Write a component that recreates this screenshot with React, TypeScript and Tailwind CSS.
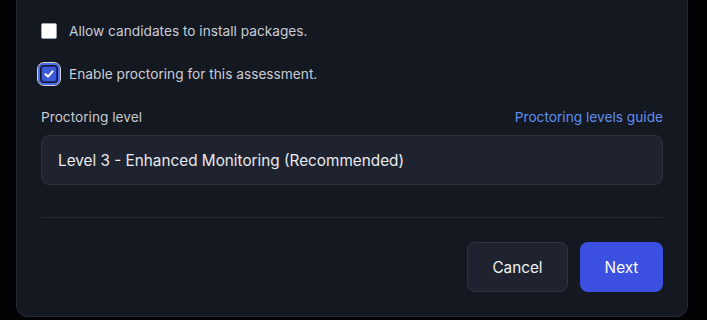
import React from "react";

export default function App() {
  return (
    <div
      className="w-[707px] h-[320px] bg-[#030305] overflow-hidden"
      style={{ fontFamily: "Inter, 'Noto Sans', sans-serif" }}
    >
      <div className="ml-[16px] w-[672px] bg-[#141821] border-x border-b border-[#262a35] rounded-b-[12px] px-[24px] pt-[21px] pb-[24px]">
        <div className="flex items-center h-[20px] gap-[12px]">
          <div className="w-[16px] h-[16px] bg-white rounded-[2px] border border-[#9ca3af]" />
          <span className="text-[13.7px] leading-5 text-[#c9cdd5]">Allow candidates to install packages.</span>
        </div>
        <div className="flex items-center h-[20px] gap-[12px] mt-[23px]">
          <div className="w-[16px] h-[16px] bg-[#3b5bdb] rounded-[3px] border border-[#1e2a80] ring-2 ring-[#4b6cf0] ring-offset-1 ring-offset-[#141821] outline outline-1 outline-offset-[3px] outline-white/80 flex items-center justify-center">
            <svg width="12" height="12" viewBox="0 0 12 12" fill="none">
              <path d="M2.5 6.3 L5 8.6 L9.6 3.4" stroke="white" strokeWidth="2" strokeLinecap="round" strokeLinejoin="round" />
            </svg>
          </div>
          <span className="text-[13.7px] leading-5 text-[#c9cdd5]">Enable proctoring for this assessment.</span>
        </div>
        <div className="flex items-center justify-between h-[20px] mt-[23px]">
          <span className="text-[13.7px] leading-5 text-[#c4c8d0]">Proctoring level</span>
          <span className="text-[13.7px] leading-5 text-[#5f8ef0]">Proctoring levels guide</span>
        </div>
        <div className="mt-[8px] h-[50px] rounded-[8px] bg-[#1f2330] border border-[#2d3240] flex items-center px-[16px] pt-[3px]">
          <span className="text-[15.3px] font-normal text-[#e8eaee]">Level 3 - Enhanced Monitoring (Recommended)</span>
        </div>
        <div className="mt-[32px] h-px bg-[#242834]" />
        <div className="mt-[24px] flex justify-end gap-[12px]">
          <button className="h-[50px] w-[101px] pt-[2px] rounded-[8px] bg-[#1f2330] border border-[#2f3442] text-[15.3px] font-normal text-[#f1f2f4]">
            Cancel
          </button>
          <button className="h-[50px] w-[83px] pt-[2px] rounded-[8px] bg-[#3b50e0] text-[15.3px] font-normal text-white">
            Next
          </button>
        </div>
      </div>
    </div>
  );
}
